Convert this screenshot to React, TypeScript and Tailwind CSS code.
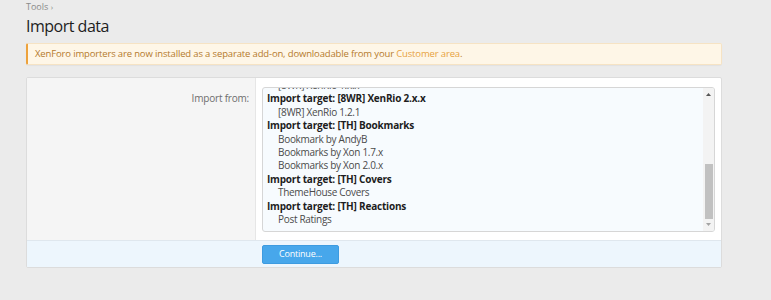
import React from 'react';

type Row = { text: string; group?: boolean };

const rows: Row[] = [
  { text: '[8WR] XenRio 1.x.x' },
  { text: 'Import target: [8WR] XenRio 2.x.x', group: true },
  { text: '[8WR] XenRio 1.2.1' },
  { text: 'Import target: [TH] Bookmarks', group: true },
  { text: 'Bookmark by AndyB' },
  { text: 'Bookmarks by Xon 1.7.x' },
  { text: 'Bookmarks by Xon 2.0.x' },
  { text: 'Import target: [TH] Covers', group: true },
  { text: 'ThemeHouse Covers' },
  { text: 'Import target: [TH] Reactions', group: true },
  { text: 'Post Ratings' },
];

export default function App() {
  return (
    <div className="w-[771px] h-[300px] overflow-hidden bg-[#ebebeb] pl-[26px] pr-[49px] font-['Open_Sans',sans-serif]">
      {/* breadcrumb + title */}
      <div className="pt-[1px] h-[12px] text-[9px] leading-[12px] text-[#8a8a8a]">
        Tools <span className="text-[8px]">›</span>
      </div>
      <h1 className="mt-[3px] h-[22px] text-[16px] leading-[22px] tracking-[-0.5px] text-[#1d1d1d]">Import data</h1>

      {/* notice */}
      <div className="mt-[6px] h-[22px] flex items-center rounded-[2px] border border-[#f6e3c4] border-l-2 border-l-[#eda23c] bg-[#fef6e7] pl-[7px] text-[9.5px] tracking-[-0.15px] text-[#b57a2c] shadow-[0_1px_1px_rgba(0,0,0,0.04)]">
        XenForo importers are now installed as a separate add-on, downloadable from your&nbsp;
        <span className="text-[#e7a23f]">Customer area</span>.
      </div>

      {/* form block */}
      <div className="mt-[12px] rounded-[2px] border border-[#dcdcdc] bg-white overflow-hidden">
        <div className="flex">
          <div className="w-[229px] bg-[#f5f5f5] border-r border-[#e6e6e6] pt-[14px] pr-[6px] text-right text-[10px] tracking-[-0.2px] leading-[13.4px] text-[#6e6e6e]">
            Import from:
          </div>
          <div className="flex-1 pl-[6px] pr-[6px] pt-[9px] pb-[8px]">
            <div className="h-[145px] flex rounded-[3px] border border-[#d6d6d6] bg-[#f7fbfe] overflow-hidden">
              <div className="flex-1 overflow-hidden pl-[4px]">
                <div className="-mt-[9px] text-[10px] leading-[13.4px]">
                  {rows.map((r, i) =>
                    r.group ? (
                      <div key={i} className="font-bold tracking-[-0.2px] text-[#1d1d1d] whitespace-nowrap">{r.text}</div>
                    ) : (
                      <div key={i} className="pl-[11px] tracking-[-0.3px] text-[#4a4a4a] whitespace-nowrap">{r.text}</div>
                    )
                  )}
                </div>
              </div>
              {/* scrollbar */}
              <div className="w-[11px] flex flex-col items-center bg-[#f3f3f3] py-[2px]">
                <svg width="7" height="5" viewBox="0 0 7 5" className="mt-[2px]">
                  <path d="M3.5 1 L6 4 H1 Z" fill="#555" />
                </svg>
                <div className="flex-1 w-full" />
                <div className="w-[8px] h-[55px] bg-[#c1c1c1]" />
                <svg width="7" height="5" viewBox="0 0 7 5" className="mt-[3px] mb-[2px]">
                  <path d="M1 1 H6 L3.5 4 Z" fill="#a3a3a3" />
                </svg>
              </div>
            </div>
          </div>
        </div>
        <div className="h-[27px] border-t border-[#dfe7ee] bg-[#edf6fd] flex items-center pl-[235px]">
          <button className="w-[77px] h-[19px] rounded-[2px] bg-[#47a7eb] text-[9px] tracking-[-0.2px] text-white border border-[#3d9be0]">
            Continue...
          </button>
        </div>
      </div>
    </div>
  );
}
